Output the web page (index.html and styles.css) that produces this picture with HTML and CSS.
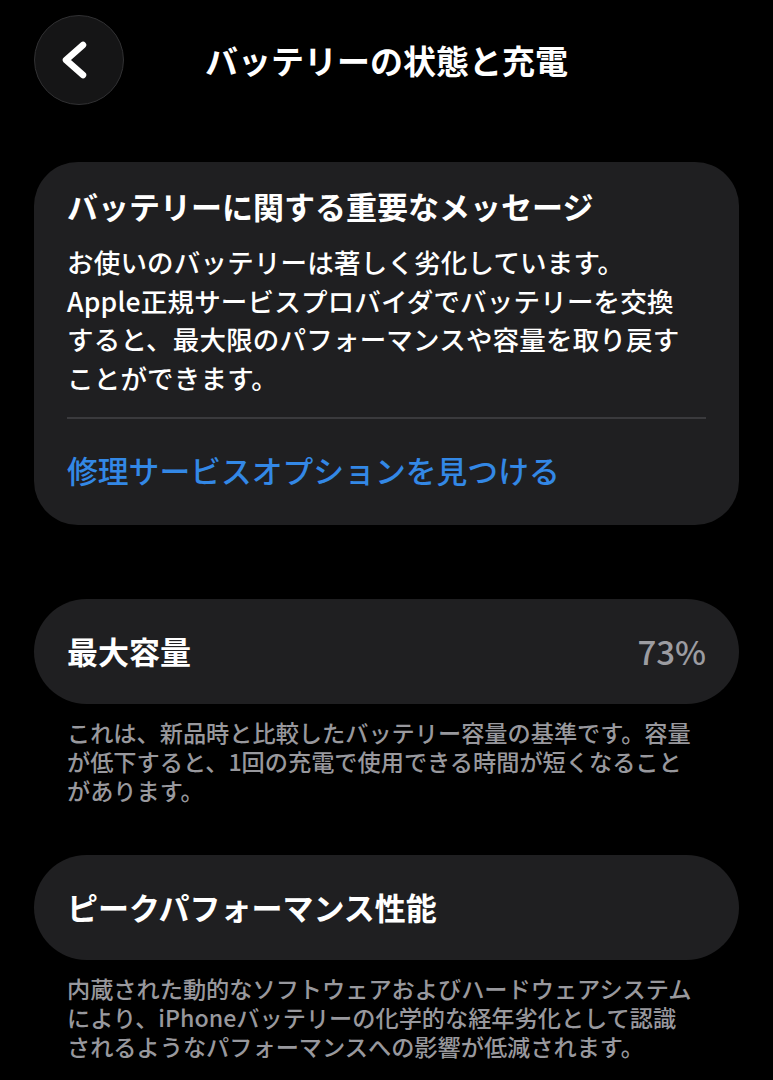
FILE: index.html
```html
<!DOCTYPE html>
<html lang="ja">
<head>
<meta charset="utf-8">
<title>バッテリーの状態と充電</title>
<link rel="stylesheet" href="styles.css">
</head>
<body>
<div class="page">
  <header class="nav">
    <div class="nav-left">
      <button class="back" aria-label="戻る">
        <svg width="40" height="44" viewBox="0 0 40 44"><path d="M26 7 L9 22 L26 37" fill="none" stroke="#fff" stroke-width="6.5" stroke-linecap="round" stroke-linejoin="round"/></svg>
      </button>
    </div>
    <h1 class="nav-title">バッテリーの状態と充電</h1>
    <div class="nav-right"></div>
  </header>

  <section class="card message">
    <h2 class="card-title">バッテリーに関する重要なメッセージ</h2>
    <p class="card-body">お使いのバッテリーは著しく劣化しています。<br>Apple正規サービスプロバイダでバッテリーを交換<br>すると、最大限のパフォーマンスや容量を取り戻す<br>ことができます。</p>
    <div class="divider"></div>
    <a class="link">修理サービスオプションを見つける</a>
  </section>

  <section class="pill first">
    <span class="pill-label">最大容量</span>
    <span class="pill-value">73%</span>
  </section>
  <p class="footnote">これは、新品時と比較したバッテリー容量の基準です。容量<br>が低下すると、1回の充電で使用できる時間が短くなること<br>があります。</p>

  <section class="pill second">
    <span class="pill-label">ピークパフォーマンス性能</span>
  </section>
  <p class="footnote">内蔵された動的なソフトウェアおよびハードウェアシステム<br>により、iPhoneバッテリーの化学的な経年劣化として認識<br>されるようなパフォーマンスへの影響が低減されます。</p>
</div>
</body>
</html>
```

FILE: styles.css
```css
html, body {
  margin: 0;
  padding: 0;
  background: #000;
}
body {
  font-family: "Noto Sans CJK JP", "Noto Sans", sans-serif;
  color: #fff;
  width: 773px;
  height: 1080px;
  overflow: hidden;
}
.page {
  padding: 15px 34px 0 34px;
}
.nav {
  display: grid;
  grid-template-columns: 1fr auto 1fr;
  align-items: center;
  height: 90px;
}
.back {
  width: 90px;
  height: 90px;
  border-radius: 50%;
  background: #151516;
  border: 1.5px solid #313133;
  box-sizing: border-box;
  display: flex;
  align-items: center;
  justify-content: center;
  padding: 0 4px 0 0;
}
.nav-title {
  margin: 0;
  font-size: 33px;
  font-weight: 700;
  line-height: 44px;
  white-space: nowrap;
}
.card {
  background: #1f1f21;
  border-radius: 44px;
  padding: 24px 33px 35px 33px;
}
.message {
  margin-top: 57px;
}
.card-title {
  margin: 0;
  font-size: 31px;
  font-weight: 700;
  line-height: 40px;
  white-space: nowrap;
}
.card-body {
  margin: 17px 0 0 0;
  font-size: 26.5px;
  line-height: 38.7px;
  font-weight: 500;
  letter-spacing: 0.2px;
  white-space: nowrap;
}
.divider {
  height: 2px;
  background: #3a3a3d;
  margin-top: 19px;
}
.link {
  display: block;
  margin-top: 31px;
  font-size: 30.8px;
  line-height: 40px;
  font-weight: 500;
  color: #3388e6;
  white-space: nowrap;
}
.pill {
  background: #1f1f21;
  border-radius: 53px;
  height: 105px;
  box-sizing: border-box;
  padding: 0 33px;
  display: flex;
  align-items: center;
  justify-content: space-between;
}
.pill.first {
  margin-top: 74px;
}
.pill.second {
  margin-top: 49px;
}
.pill-label {
  font-size: 31px;
  font-weight: 700;
  line-height: 40px;
}
.pill-value {
  font-size: 33px;
  font-weight: 500;
  line-height: 40px;
  color: #9c9ca1;
}
.footnote {
  margin: 14px 0 0 0;
  padding-left: 33px;
  font-size: 23.2px;
  line-height: 29.3px;
  font-weight: 500;
  color: #98989d;
  white-space: nowrap;
}
```
